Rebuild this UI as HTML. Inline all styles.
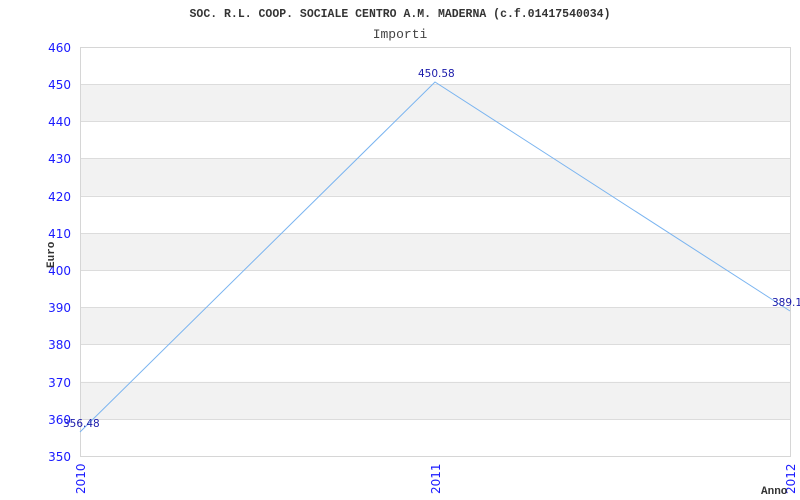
<!DOCTYPE html>
<html><head><style>body{margin:0;background:#fff}svg{display:block}</style></head><body>
<svg width="800" height="500" xmlns="http://www.w3.org/2000/svg" font-family="Liberation Mono, DejaVu Sans Mono, monospace">
<rect width="800" height="500" fill="#fff"/>
<g fill="#f2f2f2">
<rect x="80" y="84.2" width="710" height="37.2"/>
<rect x="80" y="158.6" width="710" height="37.2"/>
<rect x="80" y="233" width="710" height="37.2"/>
<rect x="80" y="307.4" width="710" height="37.2"/>
<rect x="80" y="381.8" width="710" height="37.2"/>
</g>
<g stroke="#dcdcdc" stroke-width="1">
<line x1="80" y1="84.5" x2="790" y2="84.5"/><line x1="80" y1="121.5" x2="790" y2="121.5"/>
<line x1="80" y1="158.5" x2="790" y2="158.5"/><line x1="80" y1="196.5" x2="790" y2="196.5"/>
<line x1="80" y1="233.5" x2="790" y2="233.5"/><line x1="80" y1="270.5" x2="790" y2="270.5"/>
<line x1="80" y1="307.5" x2="790" y2="307.5"/><line x1="80" y1="344.5" x2="790" y2="344.5"/>
<line x1="80" y1="382.5" x2="790" y2="382.5"/><line x1="80" y1="419.5" x2="790" y2="419.5"/>
</g>
<rect x="80.5" y="47.5" width="710" height="409" fill="none" stroke="#d6d6d6"/>
<polyline points="80,432 435,82 790,311" fill="none" stroke="#7ab4f0" stroke-width="1"/>
<g font-family="DejaVu Sans, sans-serif" font-size="10.5" fill="#1a1aaa">
<text x="418" y="77">450.58</text>
<text x="63" y="427">356.48</text>
<text x="772" y="306">389.1</text>
</g>
<g font-family="DejaVu Sans, sans-serif" font-size="12" fill="#1a1aff" text-anchor="end">
<text x="71" y="52">460</text><text x="71" y="89">450</text><text x="71" y="126">440</text>
<text x="71" y="163">430</text><text x="71" y="201">420</text><text x="71" y="238">410</text>
<text x="71" y="275">400</text><text x="71" y="312">390</text><text x="71" y="349">380</text>
<text x="71" y="387">370</text><text x="71" y="424">360</text><text x="71" y="461">350</text>
</g>
<g font-family="DejaVu Sans, sans-serif" font-size="12" fill="#1a1aff">
<text transform="translate(85,494) rotate(-90)">2010</text>
<text transform="translate(440,494) rotate(-90)">2011</text>
<text transform="translate(795,494) rotate(-90)">2012</text>
</g>
<text x="400" y="17" font-size="11.5" font-weight="bold" fill="#333" text-anchor="middle">SOC. R.L. COOP. SOCIALE CENTRO A.M. MADERNA (c.f.01417540034)</text>
<text x="400" y="38" font-size="13" fill="#444" text-anchor="middle">Importi</text>
<text transform="translate(54,268) rotate(-90)" font-size="11" font-weight="bold" fill="#333">Euro</text>
<text x="761" y="494" font-size="11" font-weight="bold" fill="#333">Anno</text>
</svg>
</body></html>
